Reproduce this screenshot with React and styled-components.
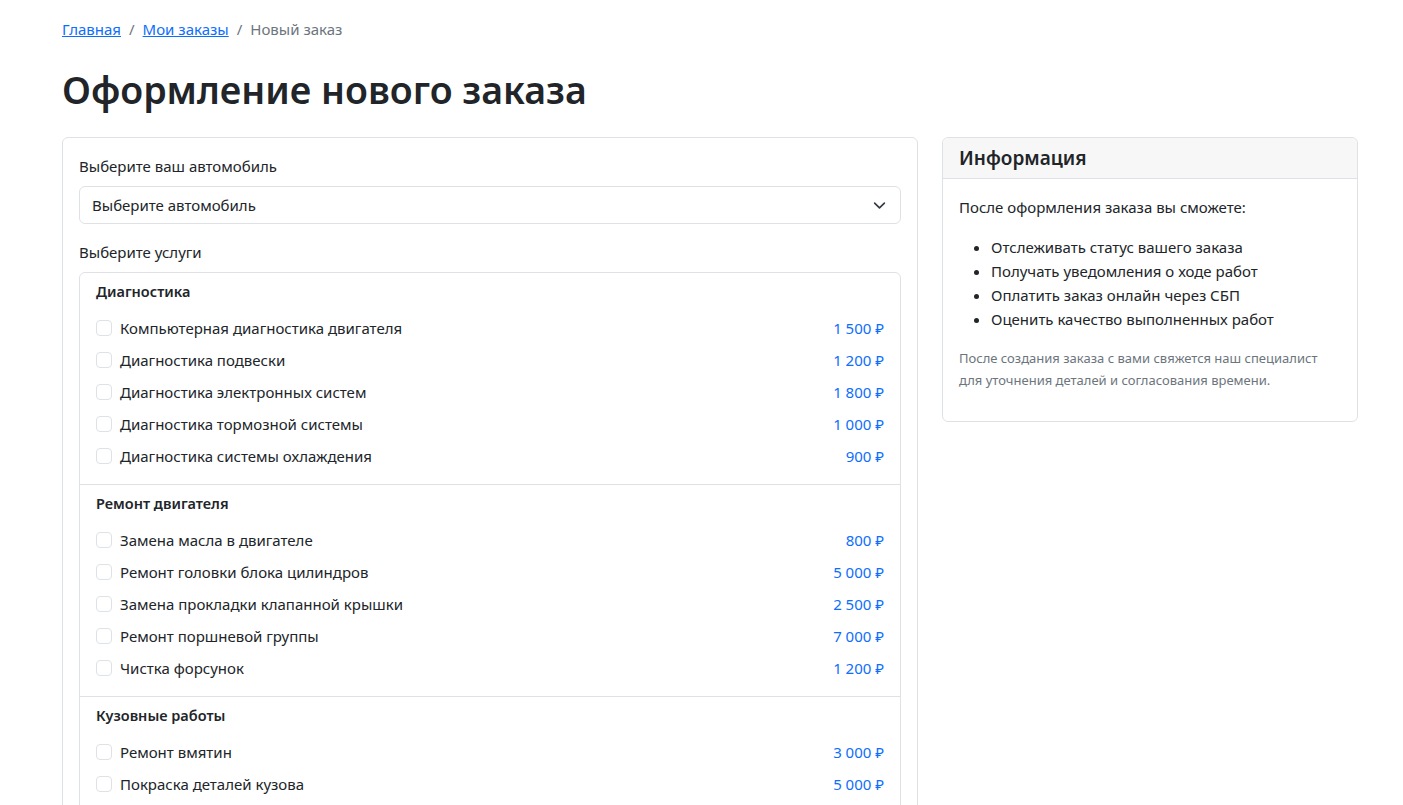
import styled, { createGlobalStyle } from 'styled-components';

const GlobalStyle = createGlobalStyle`
  * { box-sizing: border-box; }
  body {
    margin: 0;
    background: #fff;
    color: #212529;
    font-family: "Noto Sans", "Open Sans", sans-serif;
    font-size: 16px;
    line-height: 1.5;
  }
`;

const Container = styled.div`
  width: 1320px;
  margin-left: 50px;
  padding: 17px 12px 40px;
`;

const Breadcrumb = styled.nav`
  display: flex;
  align-items: center;
  font-size: 15px;
  line-height: 24px;
  color: #6c757d;
  margin-bottom: 25px;
`;

const Crumb = styled.a`
  color: #0d6efd;
  text-decoration: underline;
  cursor: pointer;
`;

const Sep = styled.span`
  color: #6c757d;
  padding: 0 8px;
`;

const Title = styled.h1`
  margin: 0 0 23px;
  font-size: 37.5px;
  line-height: 48px;
  font-weight: 600;
  color: #212529;
`;

const Row = styled.div`
  display: grid;
  grid-template-columns: 856px 416px;
  column-gap: 24px;
  align-items: start;
`;

const Card = styled.div`
  border: 1px solid #dee2e6;
  border-radius: 6px;
  background: #fff;
`;

const CardBody = styled.div`
  padding: 16px;
`;

const CardHeader = styled.div`
  padding: 8px 16px;
  background: #f7f7f7;
  border-bottom: 1px solid #dee2e6;
  border-radius: 6px 6px 0 0;
`;

const CardTitle = styled.h5`
  margin: 0;
  font-size: 19px;
  line-height: 24px;
  font-weight: 600;
`;

const Label = styled.div`
  font-size: 15px;
  line-height: 24px;
  margin-bottom: 8px;
`;

const Select = styled.div`
  height: 38px;
  display: flex;
  align-items: center;
  justify-content: space-between;
  padding: 0 14px 0 12px;
  border: 1px solid #dee2e6;
  border-radius: 6px;
  font-size: 15px;
  margin-bottom: 16px;
`;

const ServiceBox = styled.div`
  border: 1px solid #dee2e6;
  border-radius: 6px 6px 0 0;
`;

const Group = styled.div`
  padding: 6px 16px 12px;
  border-bottom: 1px solid #dee2e6;
`;

const GroupTitle = styled.h6`
  margin: 0 0 9px;
  font-size: 14.5px;
  line-height: 24px;
  font-weight: 600;
`;

const Item = styled.label`
  display: flex;
  align-items: center;
  height: 32px;
  font-size: 15px;
`;

const Check = styled.span`
  width: 16px;
  height: 16px;
  border: 1px solid #dee2e6;
  border-radius: 4px;
  margin-right: 8px;
  flex-shrink: 0;
`;

const ItemName = styled.span`
  flex: 1;
`;

const Price = styled.span`
  color: #0d6efd;
`;

const InfoText = styled.p`
  margin: 0 0 16px;
  font-size: 15px;
  line-height: 24px;
`;

const List = styled.ul`
  margin: 0 0 16px;
  padding-left: 32px;
  font-size: 15px;
  line-height: 24px;
`;

const Muted = styled.p`
  margin: 0 0 14px;
  font-size: 13px;
  line-height: 22px;
  color: #6c757d;
`;

const groups = [
  {
    title: 'Диагностика',
    items: [
      ['Компьютерная диагностика двигателя', '1 500 ₽'],
      ['Диагностика подвески', '1 200 ₽'],
      ['Диагностика электронных систем', '1 800 ₽'],
      ['Диагностика тормозной системы', '1 000 ₽'],
      ['Диагностика системы охлаждения', '900 ₽'],
    ],
  },
  {
    title: 'Ремонт двигателя',
    items: [
      ['Замена масла в двигателе', '800 ₽'],
      ['Ремонт головки блока цилиндров', '5 000 ₽'],
      ['Замена прокладки клапанной крышки', '2 500 ₽'],
      ['Ремонт поршневой группы', '7 000 ₽'],
      ['Чистка форсунок', '1 200 ₽'],
    ],
  },
  {
    title: 'Кузовные работы',
    items: [
      ['Ремонт вмятин', '3 000 ₽'],
      ['Покраска деталей кузова', '5 000 ₽'],
    ],
  },
];

const Chevron = () => (
  <svg width="13" height="13" viewBox="0 0 16 16" fill="none">
    <path d="M2 5l6 6 6-6" stroke="#343a40" strokeWidth="2" strokeLinecap="round" strokeLinejoin="round" />
  </svg>
);

export default function App() {
  return (
    <>
      <GlobalStyle />
      <Container>
        <Breadcrumb>
          <Crumb>Главная</Crumb>
          <Sep>/</Sep>
          <Crumb>Мои заказы</Crumb>
          <Sep>/</Sep>
          <span>Новый заказ</span>
        </Breadcrumb>
        <Title>Оформление нового заказа</Title>
        <Row>
          <Card>
            <CardBody>
              <Label>Выберите ваш автомобиль</Label>
              <Select>
                <span>Выберите автомобиль</span>
                <Chevron />
              </Select>
              <Label>Выберите услуги</Label>
              <ServiceBox>
                {groups.map((g) => (
                  <Group key={g.title}>
                    <GroupTitle>{g.title}</GroupTitle>
                    {g.items.map(([name, price]) => (
                      <Item key={name}>
                        <Check />
                        <ItemName>{name}</ItemName>
                        <Price>{price}</Price>
                      </Item>
                    ))}
                  </Group>
                ))}
              </ServiceBox>
            </CardBody>
          </Card>
          <Card>
            <CardHeader>
              <CardTitle>Информация</CardTitle>
            </CardHeader>
            <CardBody>
              <InfoText>После оформления заказа вы сможете:</InfoText>
              <List>
                <li>Отслеживать статус вашего заказа</li>
                <li>Получать уведомления о ходе работ</li>
                <li>Оплатить заказ онлайн через СБП</li>
                <li>Оценить качество выполненных работ</li>
              </List>
              <Muted>
                После создания заказа с вами свяжется наш специалист
                <br />
                для уточнения деталей и согласования времени.
              </Muted>
            </CardBody>
          </Card>
        </Row>
      </Container>
    </>
  );
}
